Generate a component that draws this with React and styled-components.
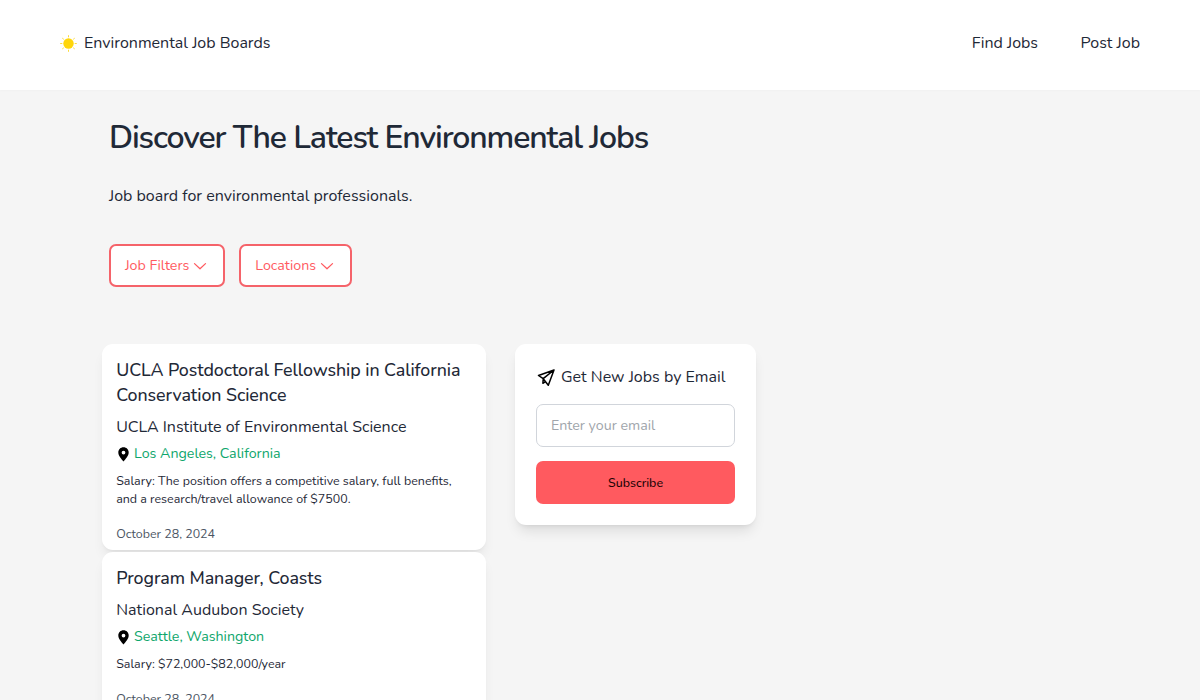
import React from "react";
import styled, { createGlobalStyle } from "styled-components";

const GlobalStyle = createGlobalStyle`
  *, *::before, *::after { box-sizing: border-box; }
  body {
    margin: 0;
    background: #f5f5f5;
    color: #1f2937;
    font: 400 16px/24px Nunito, Lato, "Open Sans", sans-serif;
  }
  h1, h2, h3, p { margin: 0; font-weight: 400; }
`;

const Page = styled.div`
  height: 700px;
  overflow: hidden;
`;

const Header = styled.header`
  display: flex;
  justify-content: space-between;
  height: 90px;
  padding: 31px 60px 0;
  background: #fff;
  box-shadow: 0 1px 2px rgba(0, 0, 0, 0.02);
`;

const Brand = styled.a`
  display: flex;
  height: 24px;
  gap: 7px;
  white-space: nowrap;
  svg { margin-top: 4px; }
`;

const Nav = styled.nav`
  display: flex;
  gap: 42.5px;
  height: 24px;
`;

const NavLink = styled.a`
  white-space: nowrap;
`;

const Hero = styled.section`
  padding: 28px 109px 0;
`;

const Heading = styled.h1`
  font-size: 32px;
  line-height: 40px;
  font-weight: 600;
  letter-spacing: -1.1px;
  white-space: nowrap;
`;

const Intro = styled.p`
  margin-top: 26px;
`;

const Filters = styled.div`
  display: flex;
  gap: 14px;
  margin-top: 36px;
`;

const FilterButton = styled.button`
  display: flex;
  align-items: center;
  gap: 4px;
  height: 43px;
  padding: 0 16px 0 14px;
  border: 2px solid #f5636a;
  border-radius: 7px;
  background: #fff;
  color: #ff5a5f;
  font: inherit;
  font-size: 14.22px;
  white-space: nowrap;
`;

const Content = styled.main`
  display: flex;
  align-items: flex-start;
  gap: 29px;
  padding: 57px 102px 0;
`;

const JobList = styled.div`
  display: flex;
  flex-direction: column;
  gap: 2px;
  width: 384px;
`;

const JobCard = styled.article`
  padding: 14px 14px 7px 14.2px;
  border-radius: 11px;
  background: #fff;
  box-shadow: 0 9px 13px -3px rgba(0, 0, 0, 0.08), 0 3px 5px -3px rgba(0, 0, 0, 0.08);
`;

const JobTitle = styled.h2`
  font-size: 17.8px;
  line-height: 25px;
  font-weight: 500;
  letter-spacing: -0.06px;
`;

const Company = styled.h3`
  margin-top: 7px;
  font-size: 16px;
  line-height: 24px;
`;

const Place = styled.div`
  display: flex;
  align-items: center;
  gap: 3.5px;
  margin-top: 4px;
  color: #0ea66b;
  font-size: 14.22px;
  line-height: 22px;
  svg { margin-left: -0.7px; }
`;

const Salary = styled.p`
  margin-top: 7px;
  font-size: 12.44px;
  line-height: 18px;
`;

const Posted = styled.p`
  margin-top: 17px;
  color: #4b5563;
  font-size: 12.44px;
  line-height: 18px;
`;

const SignupCard = styled.aside`
  width: 241px;
  height: 181px;
  padding: 21px;
  border-radius: 11px;
  background: #fff;
  box-shadow: 0 9px 13px -3px rgba(0, 0, 0, 0.1), 0 3px 5px -3px rgba(0, 0, 0, 0.1);
`;

const SignupTitle = styled.h2`
  display: flex;
  align-items: center;
  gap: 5px;
  padding-left: 1px;
  font-size: 16px;
  line-height: 24px;
  white-space: nowrap;
`;

const EmailInput = styled.input`
  display: block;
  width: 100%;
  height: 43px;
  margin-top: 15px;
  padding: 0 14px;
  border: 1px solid #d1d5db;
  border-radius: 7px;
  background: #fff;
  font: inherit;
  font-size: 14.22px;
  &::placeholder { color: #a0a5ab; opacity: 1; }
`;

const SubscribeButton = styled.button`
  width: 100%;
  height: 43px;
  margin-top: 14px;
  border: 0;
  border-radius: 7px;
  background: #ff5a5f;
  color: #1c0405;
  font: inherit;
  font-size: 12.4px;
  font-weight: 500;
`;

const Sun = () => (
  <svg width="17" height="17" viewBox="0 0 17 17" fill="none" stroke="#fbdc3c" strokeWidth="1" strokeLinecap="round">
    <circle cx="8.5" cy="8.5" r="5.2" fill="#ffd60a" stroke="none" />
    <path d="M8.5 .6v1.3M8.5 15.1v1.3M.6 8.5h1.3M15.1 8.5h1.3M2.6 3.4l.9.7M13.5 13l.9.7M2.6 13.7l.9-.7M13.5 4.1l.9-.7" />
  </svg>
);

const Chevron = () => (
  <svg width="14" height="14" viewBox="0 0 14 14" fill="none" stroke="currentColor" strokeWidth="1.25" strokeLinecap="round" strokeLinejoin="round">
    <path d="M1.5 4.6 7 9.8l5.5-5.2" />
  </svg>
);

const Pin = () => (
  <svg width="15" height="15" viewBox="0 0 24 24" fill="#000">
    <path fillRule="evenodd" d="M12 .5c-4.7 0-8.3 3.6-8.3 8.3C3.700 14 8.500 19 12 23c3.500-4 8.300-9 8.300-14.200C20.300 4.100 16.700.5 12 .5Zm0 5.300a3 3 0 1 1 0 6 3 3 0 0 1 0-6Z" />
  </svg>
);

const Plane = () => (
  <svg width="19" height="19" viewBox="0 0 19 19" fill="none" stroke="#000" strokeWidth="1.5" strokeLinejoin="round" strokeLinecap="round">
    <path d="M17 2 1.500 7.500l4.700 3.200L17 2Zm0 0-5.700 15.200-5.100-6.500M6.200 10.700l-.3 4.600 2.600-1.600" />
  </svg>
);

const jobs = [
  {
    title: "UCLA Postdoctoral Fellowship in California Conservation Science",
    company: "UCLA Institute of Environmental Science",
    place: "Los Angeles, California",
    salary: "Salary: The position offers a competitive salary, full benefits, and a research/travel allowance of $7500.",
    date: "October 28, 2024",
  },
  {
    title: "Program Manager, Coasts",
    company: "National Audubon Society",
    place: "Seattle, Washington",
    salary: "Salary: $72,000-$82,000/year",
    date: "October 28, 2024",
  },
];

export default function App() {
  return (
    <Page>
      <GlobalStyle />
      <Header>
        <Brand><Sun />Environmental Job Boards</Brand>
        <Nav>
          <NavLink>Find Jobs</NavLink>
          <NavLink>Post Job</NavLink>
        </Nav>
      </Header>
      <Hero>
        <Heading>Discover The Latest Environmental Jobs</Heading>
        <Intro>Job board for environmental professionals.</Intro>
        <Filters>
          <FilterButton>Job Filters<Chevron /></FilterButton>
          <FilterButton>Locations<Chevron /></FilterButton>
        </Filters>
      </Hero>
      <Content>
        <JobList>
          {jobs.map((job) => (
            <JobCard key={job.company}>
              <JobTitle>{job.title}</JobTitle>
              <Company>{job.company}</Company>
              <Place><Pin />{job.place}</Place>
              <Salary>{job.salary}</Salary>
              <Posted>{job.date}</Posted>
            </JobCard>
          ))}
        </JobList>
        <SignupCard>
          <SignupTitle><Plane />Get New Jobs by Email</SignupTitle>
          <EmailInput type="email" placeholder="Enter your email" />
          <SubscribeButton>Subscribe</SubscribeButton>
        </SignupCard>
      </Content>
    </Page>
  );
}
